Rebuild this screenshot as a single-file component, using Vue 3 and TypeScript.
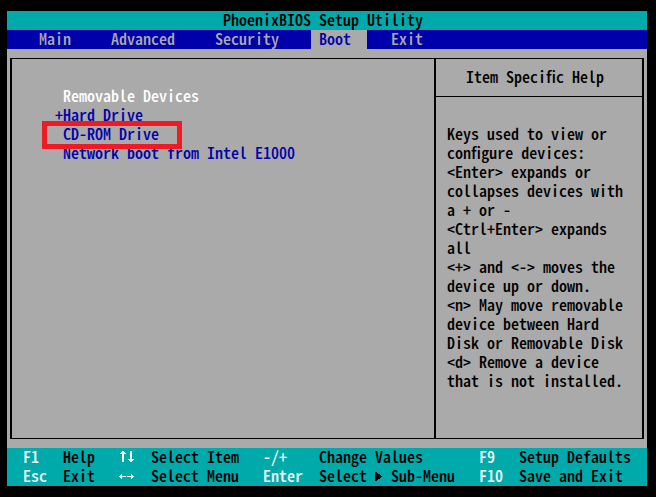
<script setup lang="ts">
import { ref } from 'vue'

interface Device {
  label: string
  expandable: boolean
}

const tabs: string[] = ['Main', 'Advanced', 'Security', 'Boot', 'Exit']
const activeTab = ref('Boot')

const devices: Device[] = [
  { label: 'Removable Devices', expandable: false },
  { label: 'Hard Drive', expandable: true },
  { label: 'CD-ROM Drive', expandable: false },
  { label: 'Network boot from Intel E1000', expandable: false },
]
const selected = ref('Removable Devices')
const marked = 'CD-ROM Drive'

const helpLines: string[] = [
  'Keys used to view or',
  'configure devices:',
  '<Enter> expands or',
  'collapses devices with',
  'a + or -',
  '<Ctrl+Enter> expands',
  'all',
  '<+> and <-> moves the',
  'device up or down.',
  '<n> May move removable',
  'device between Hard',
  'Disk or Removable Disk',
  '<d> Remove a device',
  'that is not installed.',
]
</script>

<template>
  <div class="screen">
    <header class="title">PhoenixBIOS Setup Utility</header>
    <nav class="menu">
      <button
        v-for="tab in tabs"
        :key="tab"
        type="button"
        class="tab"
        :class="{ active: tab === activeTab }"
        @click="activeTab = tab"
      >{{ tab }}</button>
    </nav>

    <main class="body">
      <div class="frame">
        <ul class="devices">
          <li v-for="d in devices" :key="d.label" class="device">
            <span class="sign">{{ d.expandable ? '+' : '' }}</span>
            <button
              type="button"
              class="entry"
              :class="{ selected: d.label === selected }"
              @click="selected = d.label"
            >{{ d.label }}</button>
            <span v-if="d.label === marked" class="marker"></span>
          </li>
        </ul>
        <aside class="help">
          <h2 class="help-title">Item Specific Help</h2>
          <div class="help-text">
            <div v-for="line in helpLines" :key="line" class="help-line">{{ line }}</div>
          </div>
        </aside>
      </div>
    </main>

    <footer class="keys">
      <span class="key">F1</span>
      <span>Help</span>
      <span class="key">
        <svg class="arrows" width="16" height="19" viewBox="0 0 16 19" shape-rendering="crispEdges" role="img" aria-label="Up and down arrows">
          <path d="M3 3h2v11h-2zM2 4h4v1h-4zM1 5h6v1h-6zM11 3h2v11h-2zM9 11h6v1h-6zM10 12h4v1h-4z" />
        </svg>
      </span>
      <span>Select Item</span>
      <span class="key">-/+</span>
      <span>Change Values</span>
      <span class="key">F9</span>
      <span>Setup Defaults</span>

      <span class="key">Esc</span>
      <span>Exit</span>
      <span class="key">
        <svg class="arrows" width="16" height="19" viewBox="0 0 16 19" shape-rendering="crispEdges" role="img" aria-label="Left and right arrows">
          <path d="M0 9h7v1h-7zM1 8h2v3h-2zM2 7h1v5h-1zM8 9h7v1h-7zM12 8h2v3h-2zM12 7h1v5h-1z" />
        </svg>
      </span>
      <span>Select Menu</span>
      <span class="key">Enter</span>
      <span class="submenu">Select
        <svg class="pointer" width="8" height="19" viewBox="0 0 8 19" shape-rendering="crispEdges" aria-hidden="true">
          <path d="M0 5h2v1h1v1h2v1h1v1h1v1h-1v1h-1v1h-2v1h-1v1h-2z" />
        </svg>
        Sub-Menu</span>
      <span class="key">F10</span>
      <span>Save and Exit</span>
    </footer>
  </div>
</template>

<style>
body {
  background: #000;
}
</style>

<style scoped>
.screen {
  box-sizing: border-box;
  display: flex;
  flex-direction: column;
  min-height: 100vh;
  padding: 11px 9px 11px 7px;
  background: #000;
  color: #000;
  font-family: "Noto Sans CJK JP", "Liberation Mono", monospace;
  font-feature-settings: "hwid" 1;
  font-size: 16px;
  font-weight: 500;
  line-height: 17px;
  white-space: nowrap;
}
button {
  margin: 0;
  padding: 0;
  border: 0;
  background: none;
  color: inherit;
  font: inherit;
  font-feature-settings: inherit;
  text-align: left;
  cursor: pointer;
}
.title {
  height: 19px;
  padding-right: 8px;
  background: #00aaaa;
  text-align: center;
}
.menu {
  display: flex;
  gap: 16px;
  height: 19px;
  padding-left: 24px;
  background: #0000aa;
  color: #aaaaaa;
}
.tab {
  padding: 0 16px 2px 8px;
}
.tab.active {
  background: #aaaaaa;
  color: #0000aa;
}
.body {
  display: flex;
  flex: 1;
  padding: 9px 3px;
  background: #aaaaaa;
}
.frame {
  display: flex;
  flex: 1;
  border: solid #000;
  border-width: 1px 2px;
}
.devices {
  flex: 1;
  margin: 0;
  padding: 28px 0 0 43px;
  list-style: none;
  color: #0000aa;
}
.device {
  position: relative;
  display: flex;
  height: 19px;
}
.sign {
  width: 8px;
}
.entry {
  padding-bottom: 2px;
}
.entry.selected {
  color: #fff;
}
.marker {
  position: absolute;
  z-index: 1;
  top: -4px;
  left: -13px;
  box-sizing: border-box;
  width: 140px;
  height: 28px;
  border: 5px solid #ed1c24;
  pointer-events: none;
}
.help {
  width: 206px;
  border-left: 2px solid #000;
}
.help-title {
  margin: 0;
  padding: 9px 8px 11px 0;
  border-bottom: 1px solid #000;
  font-size: 16px;
  font-weight: 500;
  text-align: center;
}
.help-text {
  padding: 28px 0 28px 11px;
}
.help-line {
  height: 19px;
}
.keys {
  display: grid;
  grid-template-columns: 40px 56px 32px 112px 56px 160px 40px 1fr;
  grid-auto-rows: 19px;
  padding-left: 16px;
  background: #00aaaa;
}
.key {
  color: #fff;
}
.arrows,
.pointer {
  display: block;
  fill: currentColor;
}
.submenu {
  display: flex;
  gap: 8px;
}
</style>
